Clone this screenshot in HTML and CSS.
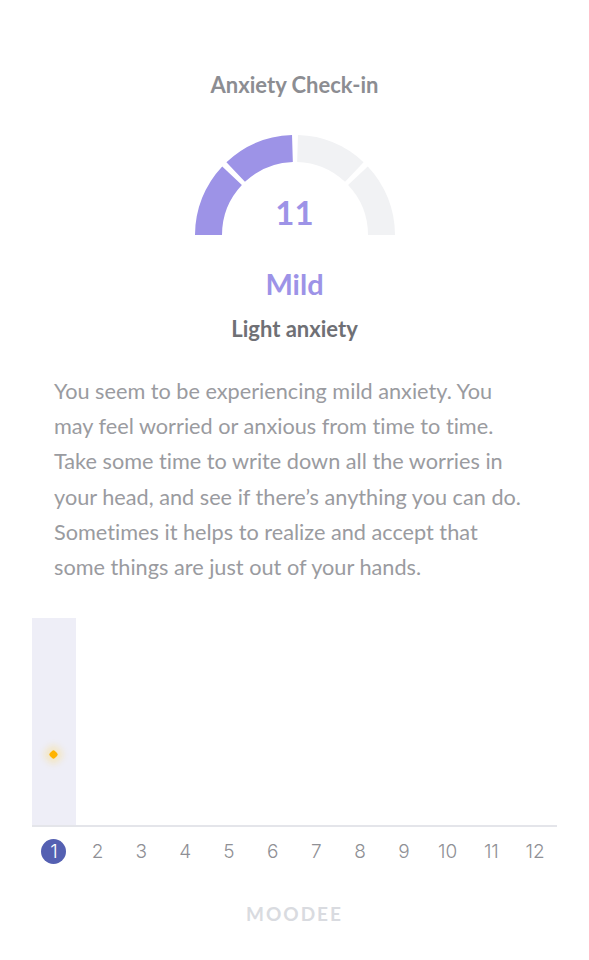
FILE: index.html
```html
<!DOCTYPE html>
<html lang="en">
<head>
<meta charset="utf-8">
<title>Anxiety Check-in</title>
<link rel="stylesheet" href="styles.css">
</head>
<body>
<main class="screen">
  <h1 class="title">Anxiety Check-in</h1>

  <div class="gauge">
    <svg class="gauge-arc" width="200" height="100" viewBox="0 0 200 100">
      <g fill="none" stroke-width="27">
        <path class="seg on" d="M13.5 100 A86.5 86.5 0 0 1 37.05 40.68"/>
        <path class="seg on" d="M40.68 37.05 A86.5 86.5 0 0 1 97.43 13.54"/>
        <path class="seg" d="M102.57 13.54 A86.5 86.5 0 0 1 159.32 37.05"/>
        <path class="seg" d="M162.95 40.68 A86.5 86.5 0 0 1 186.5 100"/>
      </g>
    </svg>
    <div class="gauge-score">11</div>
  </div>

  <div class="level">Mild</div>
  <div class="level-sub">Light anxiety</div>

  <p class="advice">You seem to be experiencing mild anxiety. You may feel worried or anxious from time to time. Take some time to write down all the worries in your head, and see if there’s anything you can do. Sometimes it helps to realize and accept that some things are just out of your hands.</p>

  <section class="chart">
    <div class="plot">
      <div class="col active"><span class="point"></span></div>
      <div class="col"></div><div class="col"></div><div class="col"></div>
      <div class="col"></div><div class="col"></div><div class="col"></div>
      <div class="col"></div><div class="col"></div><div class="col"></div>
      <div class="col"></div><div class="col"></div>
    </div>
    <div class="axis">
      <span class="tick current">1</span>
      <span class="tick">2</span>
      <span class="tick">3</span>
      <span class="tick">4</span>
      <span class="tick">5</span>
      <span class="tick">6</span>
      <span class="tick">7</span>
      <span class="tick">8</span>
      <span class="tick">9</span>
      <span class="tick">10</span>
      <span class="tick">11</span>
      <span class="tick">12</span>
    </div>
  </section>

  <footer class="brand">MOODEE</footer>
</main>
</body>
</html>
```
FILE: styles.css
```css
* { box-sizing: border-box; }

html, body {
  margin: 0;
  padding: 0;
  background: #ffffff;
}

body {
  font-family: "Lato", "Liberation Sans", sans-serif;
  font-variant-ligatures: no-common-ligatures;
  width: 589px;
  height: 960px;
  overflow: hidden;
}

.screen {
  display: flex;
  flex-direction: column;
  align-items: center;
  padding-top: 71px;
}

.title {
  margin: 0;
  font-size: 22px;
  line-height: 28px;
  font-weight: 700;
  color: #8c8d92;
}

.gauge {
  position: relative;
  margin-top: 36px;
  width: 200px;
  height: 100px;
}

.gauge-arc { display: block; }

.seg { stroke: #f1f2f4; }
.seg.on { stroke: #9d93e7; }

.gauge-score {
  position: absolute;
  left: 0;
  right: 0;
  bottom: 3px;
  text-align: center;
  font-size: 33px;
  line-height: 40px;
  font-weight: 700;
  color: #9d93e7;
}

.level {
  margin-top: 32px;
  font-size: 29px;
  line-height: 34px;
  font-weight: 700;
  color: #9d93e7;
}

.level-sub {
  margin-top: 14px;
  font-size: 22px;
  line-height: 28px;
  font-weight: 700;
  color: #6f7075;
}

.advice {
  margin: 31px 0 0;
  padding: 0 64px 0 54px;
  font-size: 21.7px;
  line-height: 35.2px;
  font-weight: 400;
  color: #9a9ba0;
  align-self: stretch;
}

.chart {
  align-self: stretch;
  margin: 33px 32px 0;
}

.plot {
  display: grid;
  grid-template-columns: repeat(12, 1fr);
  height: 209px;
  border-bottom: 2px solid #e4e5ea;
}

.col { position: relative; }
.col.active { background: #eeeef7; }

.point {
  position: absolute;
  left: 50%;
  top: 133px;
  width: 7px;
  height: 7px;
  margin-left: -3.5px;
  background: #ffb300;
  border-radius: 2px;
  transform: rotate(45deg);
  box-shadow: 0 0 6px 5px rgba(255, 214, 90, 0.3);
}

.axis {
  display: grid;
  grid-template-columns: repeat(12, 1fr);
  margin-top: 12px;
}

.tick {
  justify-self: center;
  width: 25px;
  height: 25px;
  display: flex;
  align-items: center;
  justify-content: center;
  font-family: "Inter", "Roboto", sans-serif;
  font-size: 19px;
  font-weight: 300;
  color: #8f9095;
}

.tick.current {
  border-radius: 50%;
  background: #5460b2;
  color: #ffffff;
}

.brand {
  margin-top: 38px;
  font-size: 19px;
  line-height: 24px;
  font-weight: 700;
  letter-spacing: 2px;
  color: #d9dbe0;
}
```
